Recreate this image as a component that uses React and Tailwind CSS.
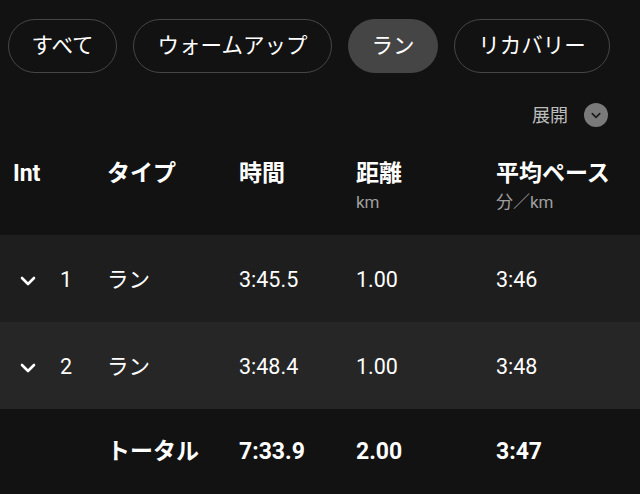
import React from 'react';

const chips = [
  { label: 'すべて', w: 'w-[109px]' },
  { label: 'ウォームアップ', w: 'w-[199px]' },
  { label: 'ラン', w: 'w-[90px]', active: true },
  { label: 'リカバリー', w: 'w-[156px]' },
];

const laps = [
  { no: 1, type: 'ラン', time: '3:45.5', dist: '1.00', pace: '3:46', bg: 'bg-[#1e1e1e]' },
  { no: 2, type: 'ラン', time: '3:48.4', dist: '1.00', pace: '3:48', bg: 'bg-[#262626]' },
];

const cols = 'grid grid-cols-[107px_132px_117px_140px_1fr]';

const Chevron = ({ className }) => (
  <svg viewBox="0 0 16 10" className={className} fill="none">
    <path d="M2 2l6 6 6-6" stroke="currentColor" strokeWidth="2.6" strokeLinecap="round" strokeLinejoin="round" />
  </svg>
);

export default function App() {
  return (
    <div
      className="w-[640px] h-[494px] overflow-hidden bg-[#121212] text-white"
      style={{ fontFamily: 'Roboto, "Noto Sans CJK JP", sans-serif' }}
    >
      {/* filter chips */}
      <div className="flex gap-[16px] pl-[8px] pt-[19px]">
        {chips.map((c) => (
          <div
            key={c.label}
            className={`${c.w} h-[54px] rounded-full flex items-center justify-center text-[21.5px] ${
              c.active ? 'bg-[#454545]' : 'border-[1.5px] border-[#464646]'
            }`}
          >
            {c.label}
          </div>
        ))}
      </div>

      {/* expand */}
      <div className="flex justify-end items-center gap-[16px] pr-[32px] mt-[30px] h-[24px]">
        <span className="text-[18px] text-[#bdbdbd]">展開</span>
        <span className="w-[24px] h-[24px] rounded-full bg-[#7a7a7a] flex items-center justify-center text-[#1a1a1a]">
          <Chevron className="w-[10px] h-[7px]" />
        </span>
      </div>

      {/* header */}
      <div className={`${cols} h-[108px] pt-[31px] font-bold text-[23px] leading-[32px]`}>
        <div className="pl-[13px]">Int</div>
        <div>タイプ</div>
        <div>時間</div>
        <div>
          <div>距離</div>
          <div className="font-normal text-[17px] leading-[24px] text-[#9e9e9e]">km</div>
        </div>
        <div>
          <div>平均ペース</div>
          <div className="font-normal text-[17px] leading-[24px] text-[#9e9e9e]">分／km</div>
        </div>
      </div>

      {/* laps */}
      {laps.map((l) => (
        <div key={l.no} className={`${cols} ${l.bg} h-[87px] pt-[4px] items-center text-[21.5px]`}>
          <div className="flex items-center">
            <Chevron className="ml-[20px] w-[16px] h-[10px]" />
            <span className="ml-[24px]">{l.no}</span>
          </div>
          <div>{l.type}</div>
          <div>{l.time}</div>
          <div>{l.dist}</div>
          <div>{l.pace}</div>
        </div>
      ))}

      {/* total */}
      <div className={`${cols} h-[85px] pt-[2px] items-center text-[23px] font-bold`}>
        <div />
        <div>トータル</div>
        <div>7:33.9</div>
        <div>2.00</div>
        <div>3:47</div>
      </div>
    </div>
  );
}
